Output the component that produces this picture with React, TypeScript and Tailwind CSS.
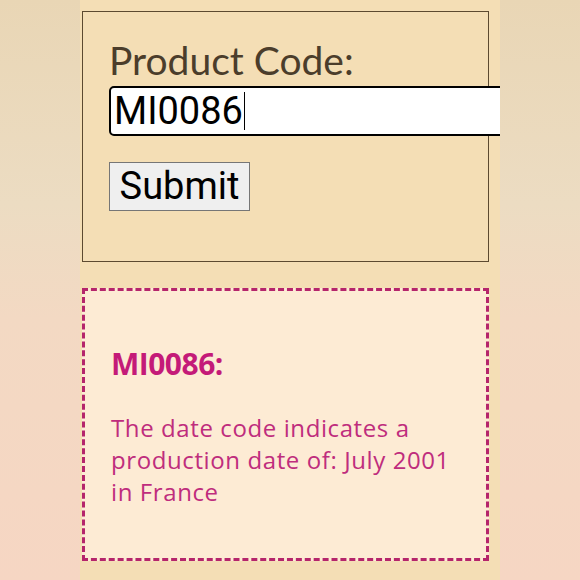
export default function App() {
  return (
    <div className="flex h-[580px] w-[580px] justify-center overflow-hidden bg-[linear-gradient(180deg,#e9d6b5_0%,#ecdcc2_35%,#f3d9c3_55%,#f6d6c3_100%)]">
      <div className="w-[420px] overflow-hidden bg-[#f4deb5] pl-[2px] pt-[11px]">
        {/* lookup form */}
        <form className="h-[251px] w-[407px] border border-[#5c4a30] pl-[26px] pt-[26px]">
          <label className="block font-['Lato',sans-serif] text-[39px] leading-[44px] text-[#4b3d2b]">
            Product Code:
          </label>
          <div className="mt-[4px] flex h-[50px] w-[420px] items-center rounded-l-[5px] border-2 border-black bg-white pl-[3px]">
            <span className="font-['Roboto',sans-serif] text-[38px] leading-none text-black">MI0086</span>
            <span className="ml-[1px] h-[38px] w-[1px] bg-black" />
          </div>
          <button
            type="button"
            className="mt-[26px] flex h-[49px] w-[141px] items-center justify-center border border-[#767676] bg-[#efefef] pb-[2px] font-['Roboto',sans-serif] text-[38px] leading-none text-black"
          >
            Submit
          </button>
        </form>

        {/* result */}
        <div className="mt-[26px] h-[273px] w-[407px] border-[3px] border-dashed border-[#b5256b] bg-[#fdebd4] pl-[26px] pt-[53px] font-['Open_Sans',sans-serif]">
          <h2 className="text-[30px] font-bold leading-[40px] tracking-[-0.5px] text-[#c41a78]">MI0086:</h2>
          <p className="mt-[28px] w-[350px] text-[24px] leading-[32px] tracking-[0.6px] text-[#bf2d7d]">
            The date code indicates a production date of: July 2001 in France
          </p>
        </div>
      </div>
    </div>
  );
}
